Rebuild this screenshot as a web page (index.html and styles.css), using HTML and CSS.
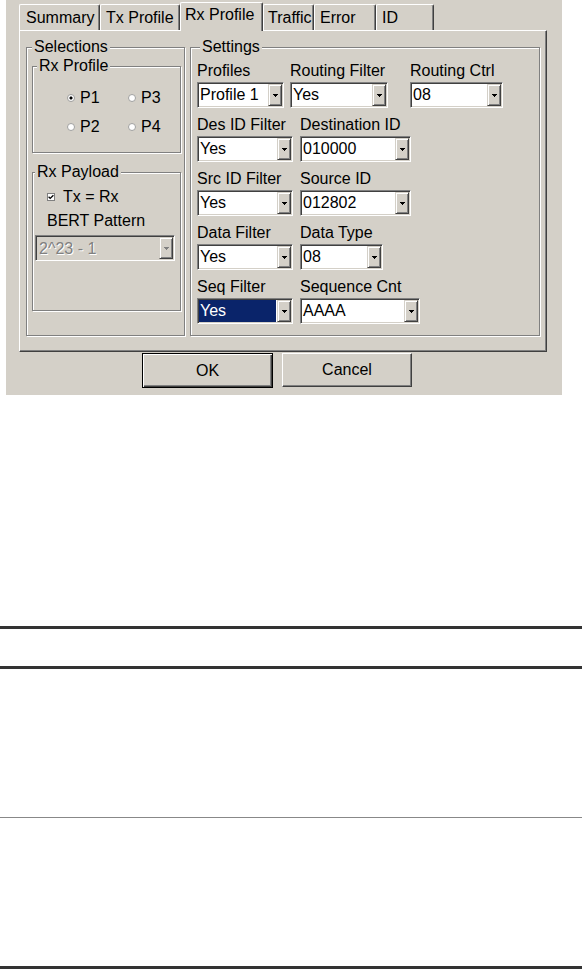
FILE: index.html
```html
<!DOCTYPE html>
<html>
<head>
<meta charset="utf-8">
<link rel="stylesheet" href="styles.css">
</head>
<body>
<div class="dialog">
  <div class="tabs">
    <div class="tab t-summary">Summary</div>
    <div class="tab t-tx">Tx Profile</div>
    <div class="tab tab-active t-rx">Rx Profile</div>
    <div class="tab t-traffic">Traffic</div>
    <div class="tab t-error">Error</div>
    <div class="tab t-id">ID</div>
  </div>
  <div class="panel">
    <fieldset class="group g-selections">
      <legend>Selections</legend>
      <fieldset class="group g-rxprofile">
        <legend>Rx Profile</legend>
        <div class="radios">
          <div class="radio-item"><span class="radio on"></span>P1</div>
          <div class="radio-item"><span class="radio"></span>P3</div>
          <div class="radio-item"><span class="radio"></span>P2</div>
          <div class="radio-item"><span class="radio"></span>P4</div>
        </div>
      </fieldset>
      <fieldset class="group g-payload">
        <legend>Rx Payload</legend>
        <div class="chkrow">
          <svg class="chk" width="8" height="8" viewBox="0 0 8 8"><rect x="0.5" y="0.5" width="7" height="7" fill="#fff" stroke="#808080"/><path d="M1.6 3.8 L3.2 5.4 L6.4 2.2" fill="none" stroke="#000" stroke-width="1.3"/></svg>
          <span>Tx = Rx</span>
        </div>
        <div class="bert">BERT Pattern</div>
        <div class="combo disabled payload-combo"><span class="val">2^23 - 1</span><span class="dd"></span></div>
      </fieldset>
    </fieldset>
    <fieldset class="group g-settings">
      <legend>Settings</legend>
      <div class="srow">
        <div class="field w87"><div class="lbl">Profiles</div><div class="combo"><span class="val">Profile 1</span><span class="dd"></span></div></div>
        <div class="field w98 ml6"><div class="lbl">Routing Filter</div><div class="combo"><span class="val">Yes</span><span class="dd"></span></div></div>
        <div class="field w93 ml22"><div class="lbl">Routing Ctrl</div><div class="combo"><span class="val">08</span><span class="dd"></span></div></div>
      </div>
      <div class="srow">
        <div class="field w96"><div class="lbl">Des ID Filter</div><div class="combo"><span class="val">Yes</span><span class="dd"></span></div></div>
        <div class="field w111 ml7"><div class="lbl">Destination ID</div><div class="combo"><span class="val">010000</span><span class="dd"></span></div></div>
      </div>
      <div class="srow">
        <div class="field w96"><div class="lbl">Src ID Filter</div><div class="combo"><span class="val">Yes</span><span class="dd"></span></div></div>
        <div class="field w111 ml7"><div class="lbl">Source ID</div><div class="combo"><span class="val">012802</span><span class="dd"></span></div></div>
      </div>
      <div class="srow">
        <div class="field w96"><div class="lbl">Data Filter</div><div class="combo"><span class="val">Yes</span><span class="dd"></span></div></div>
        <div class="field w83 ml7"><div class="lbl">Data Type</div><div class="combo"><span class="val">08</span><span class="dd"></span></div></div>
      </div>
      <div class="srow">
        <div class="field w96"><div class="lbl">Seq Filter</div><div class="combo"><span class="val sel">Yes</span><span class="dd"></span></div></div>
        <div class="field w120 ml7"><div class="lbl">Sequence Cnt</div><div class="combo"><span class="val">AAAA</span><span class="dd"></span></div></div>
      </div>
    </fieldset>
  </div>
  <div class="buttons">
    <button class="btn btn-default">OK</button>
    <button class="btn">Cancel</button>
  </div>
</div>
<div class="doc">
  <div class="doc-head"></div>
  <div class="doc-row"></div>
  <div class="doc-row"></div>
</div>
</body>
</html>
```
FILE: styles.css
```css
html, body {
  margin: 0;
  padding: 0;
  background: #fff;
}

.dialog {
  margin-left: 6px;
  width: 556px;
  height: 395px;
  background: #d4d0c8;
  overflow: hidden;
  font-family: "Liberation Sans", Arial, sans-serif;
  font-size: 16px;
  line-height: 16px;
  color: #000;
}

/* ---------- tabs ---------- */
.tabs {
  display: flex;
  align-items: flex-end;
  height: 30px;
  padding-left: 13px;
}
.tab {
  box-sizing: border-box;
  height: 26px;
  padding-top: 5px;
  white-space: nowrap;
  border-top: 1px solid #fff;
  border-left: 1px solid #fff;
  border-right: 1px solid #404040;
  border-radius: 2px 2px 0 0;
  box-shadow: inset -1px 0 #808080;
}
.tab-active {
  position: relative;
  z-index: 1;
  height: 29px;
  margin-bottom: -1px;
  padding-top: 4px;
  background: #d4d0c8;
}
.t-summary { width: 81px; padding-left: 6px; }
.t-tx { width: 80px; padding-left: 5px; }
.t-rx { width: 83px; padding-left: 4px; }
.t-traffic { width: 51px; padding-left: 4px; }
.t-error { width: 62px; padding-left: 5px; }
.t-id { width: 58px; padding-left: 5px; }

/* ---------- panel ---------- */
.panel {
  box-sizing: border-box;
  margin-left: 13px;
  width: 528px;
  height: 322px;
  display: flex;
  align-items: flex-start;
  gap: 5px;
  padding: 8px 0 0 6px;
  border-top: 1px solid #fff;
  border-left: 1px solid #fff;
  border-right: 1px solid #404040;
  border-bottom: 1px solid #404040;
  box-shadow: inset -1px -1px #808080;
}

/* ---------- group boxes ---------- */
.group {
  box-sizing: border-box;
  margin: 0;
  padding: 0;
  min-width: 0;
  border: 1px solid #808080;
  box-shadow: inset 1px 1px #fff, 1px 1px #fff;
}
.group > legend {
  padding: 0 2px;
  line-height: 16px;
  background: #d4d0c8;
}
.g-selections {
  width: 159px;
  height: 297px;
  padding: 3px 0 0 5px;
}
.g-rxprofile {
  width: 149px;
  height: 95px;
}
.g-rxprofile > legend { margin-left: 4px; }
.g-payload {
  width: 149px;
  height: 147px;
  margin-top: 11px;
}
.g-payload > legend { margin-left: 2px; }
.g-settings {
  width: 350px;
  height: 297px;
  padding: 8px 0 0 6px;
}
.g-settings > legend { margin-left: 3px; }

/* ---------- radios ---------- */
.radios {
  display: grid;
  grid-template-columns: 61px auto;
  row-gap: 13px;
  margin: 16px 0 0 34px;
}
.radio-item {
  display: flex;
  align-items: center;
  gap: 5px;
}
.radio {
  box-sizing: border-box;
  width: 8px;
  height: 8px;
  border-radius: 50%;
  background: #fff;
  border: 1px solid #a0a0a0;
}
.radio.on {
  background: radial-gradient(circle, #000 0 1.3px, #fff 1.8px);
}

/* ---------- payload ---------- */
.chkrow {
  display: flex;
  align-items: center;
  gap: 8px;
  margin: 9px 0 0 14px;
}
.chk { display: block; }
.bert {
  margin: 8px 0 0 14px;
}
.payload-combo {
  width: 140px;
  height: 28px;
  margin: 6px 0 0 2px;
}
.payload-combo .val { line-height: 24px; }

/* ---------- settings rows ---------- */
.srow {
  display: flex;
  margin-bottom: 9px;
}
.lbl {
  white-space: nowrap;
  margin-bottom: 3px;
}
.w87 { width: 87px; }
.w98 { width: 98px; }
.w93 { width: 93px; }
.w96 { width: 96px; }
.w111 { width: 111px; }
.w83 { width: 83px; }
.w120 { width: 120px; }
.ml6 { margin-left: 6px; }
.ml7 { margin-left: 7px; }
.ml22 { margin-left: 22px; }

/* ---------- combo boxes ---------- */
.combo {
  box-sizing: border-box;
  display: flex;
  height: 26px;
  padding: 1px;
  background: #fff;
  border: 1px solid;
  border-color: #808080 #fff #fff #808080;
  box-shadow: inset 1px 1px #404040, inset -1px -1px #d4d0c8;
}
.val {
  flex: 1;
  min-width: 0;
  padding-left: 1px;
  line-height: 22px;
  white-space: nowrap;
  overflow: hidden;
}
.val.sel {
  background: #0a246a;
  color: #fff;
  margin-right: 1px;
}
.dd {
  box-sizing: border-box;
  flex: none;
  width: 14px;
  display: flex;
  align-items: center;
  justify-content: center;
  background: #d4d0c8;
  border: 1px solid;
  border-color: #d4d0c8 #404040 #404040 #d4d0c8;
  box-shadow: inset 1px 1px #fff, inset -1px -1px #808080;
}
.dd::after {
  content: "";
  width: 1px;
  height: 1px;
  margin-top: -2px;
  background: #000;
  box-shadow: -2px 0 #000, -1px 0 #000, 1px 0 #000, 2px 0 #000,
              -1px 1px #000, 0 1px #000, 1px 1px #000, 0 2px #000;
}
.combo.disabled {
  background: #d4d0c8;
}
.combo.disabled .val {
  color: #808080;
  text-shadow: 1px 1px #fff;
  padding-left: 2px;
}
.combo.disabled .dd::after {
  background: #808080;
  box-shadow: -2px 0 #808080, -1px 0 #808080, 1px 0 #808080, 2px 0 #808080,
              -1px 1px #808080, 0 1px #808080, 1px 1px #808080, 0 2px #808080;
}

/* ---------- buttons ---------- */
.buttons {
  display: flex;
  align-items: flex-start;
  gap: 9px;
  margin: 1px 0 0 136px;
}
.btn {
  box-sizing: border-box;
  width: 130px;
  height: 34px;
  padding: 0;
  margin: 0;
  font: inherit;
  color: #000;
  background: #d4d0c8;
  border: 1px solid;
  border-color: #fff #404040 #404040 #fff;
  box-shadow: inset -1px -1px #808080;
  display: flex;
  align-items: center;
  justify-content: center;
}
.btn-default {
  width: 131px;
  height: 35px;
  border-color: #000;
  box-shadow: inset 1px 1px #fff, inset -1px -1px #404040, inset -2px -2px #808080;
}

/* ---------- document rules below ---------- */
.doc {
  margin-top: 231px;
  border-top: 3px solid #333;
  border-bottom: 3px solid #333;
}
.doc-head {
  height: 37px;
  border-bottom: 3px solid #333;
}
.doc-row {
  height: 148px;
}
.doc-row + .doc-row {
  border-top: 1px solid #888;
}
```
